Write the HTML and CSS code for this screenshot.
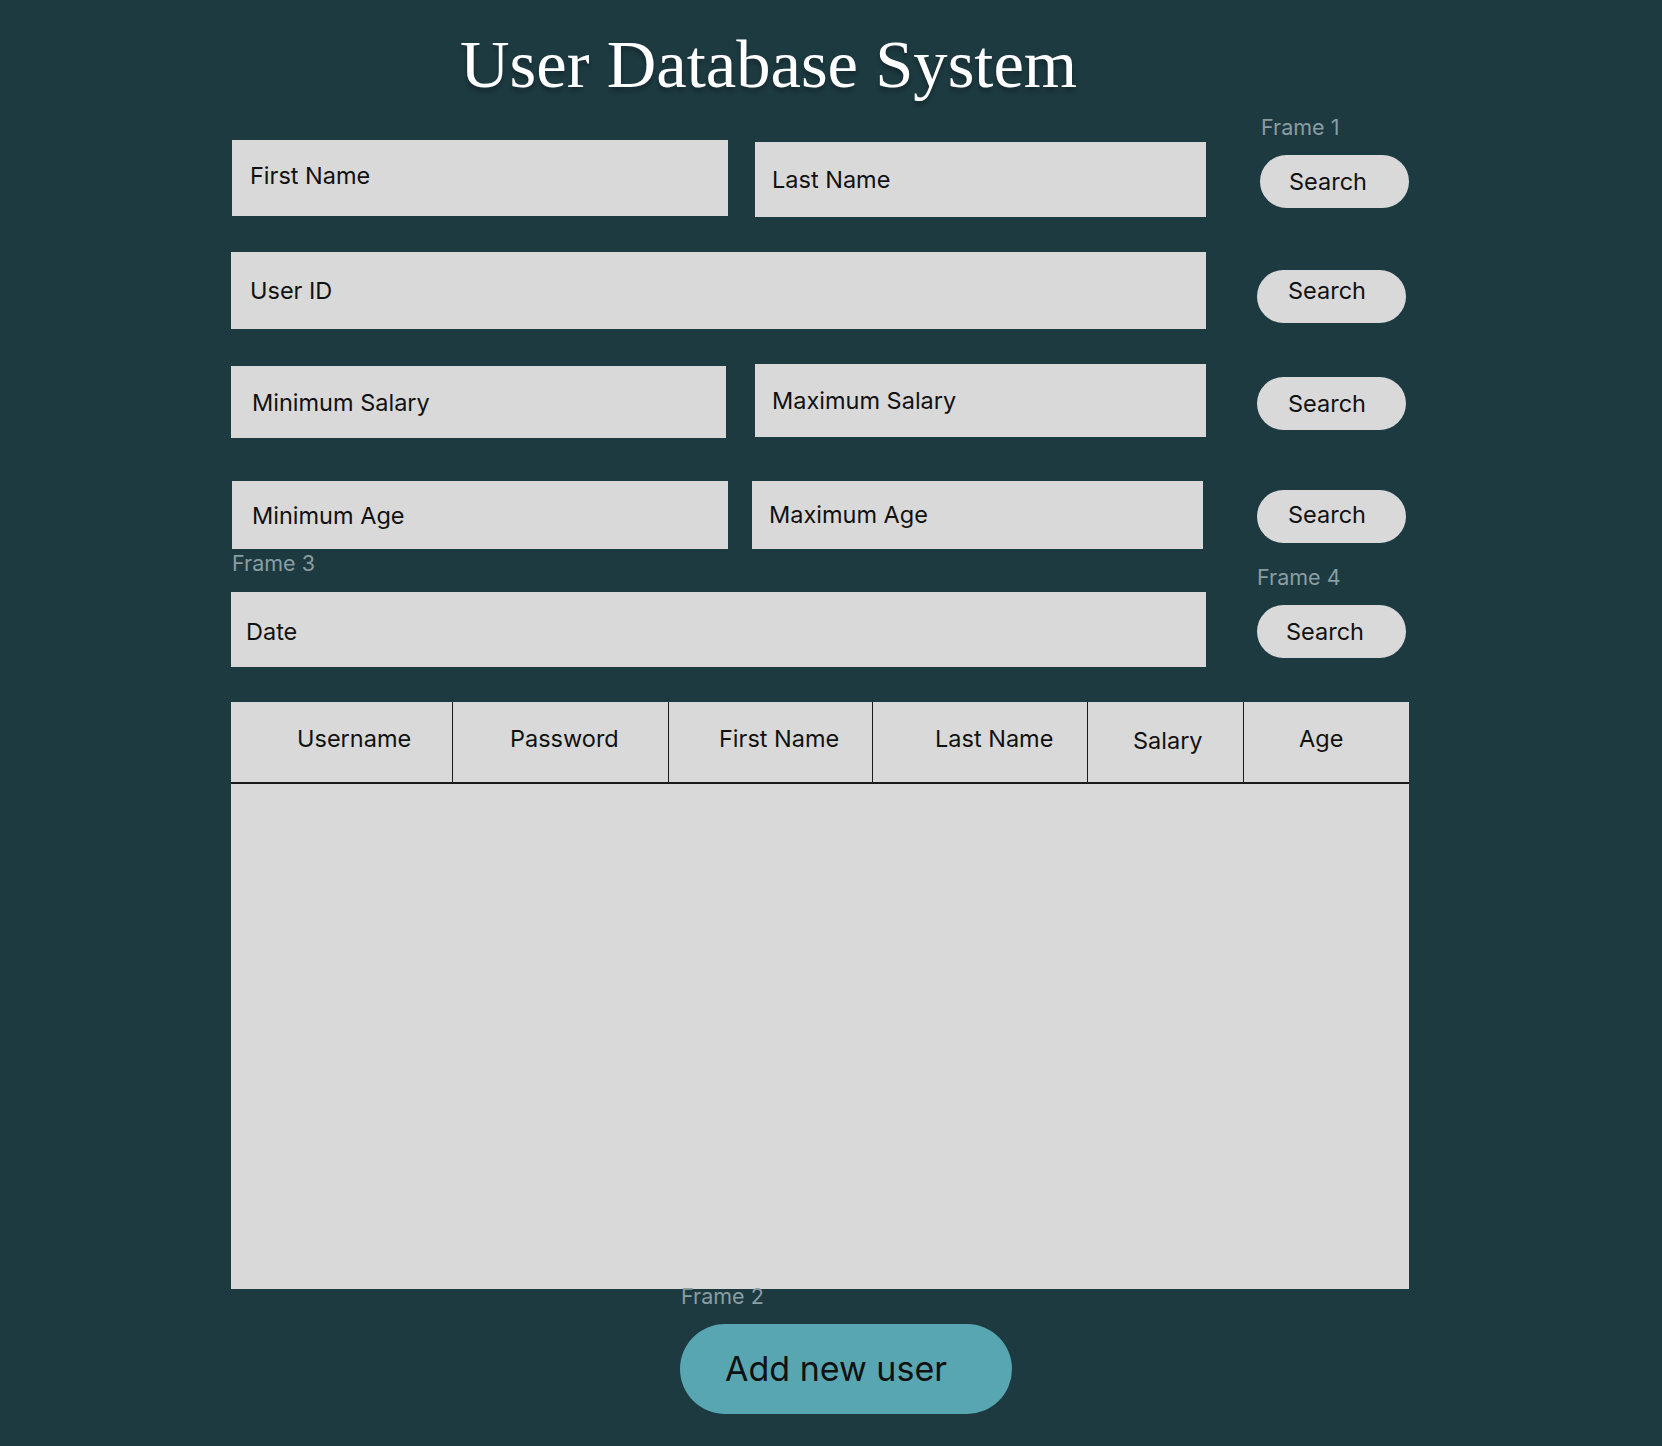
FILE: index.html
```html
<!DOCTYPE html>
<html lang="en">
<head>
<meta charset="utf-8">
<title>User Database System</title>
<link rel="stylesheet" href="styles.css">
</head>
<body>
<div class="page">
  <h1 class="title">User Database System</h1>

  <div class="row row-1">
    <div class="field f-first">First Name</div>
    <div class="field f-last">Last Name</div>
    <div class="action a-1">
      <span class="frame-label fl-1">Frame 1</span>
      <button class="search s-1">Search</button>
    </div>
  </div>

  <div class="row row-2">
    <div class="field f-userid">User ID</div>
    <div class="action a-2">
      <button class="search s-2">Search</button>
    </div>
  </div>

  <div class="row row-3">
    <div class="field f-minsal">Minimum Salary</div>
    <div class="field f-maxsal">Maximum Salary</div>
    <div class="action a-3">
      <button class="search">Search</button>
    </div>
  </div>

  <div class="row row-4">
    <div class="field f-minage">Minimum Age</div>
    <div class="field f-maxage">Maximum Age</div>
    <div class="action a-4">
      <button class="search s-4">Search</button>
    </div>
  </div>

  <div class="labels">
    <span class="frame-label fl-3">Frame 3</span>
    <span class="frame-label fl-4">Frame 4</span>
  </div>

  <div class="row row-5">
    <div class="field f-date">Date</div>
    <div class="action a-5">
      <button class="search s-5">Search</button>
    </div>
  </div>

  <div class="table">
    <div class="thead">
      <div class="th c1">Username</div>
      <div class="th c2">Password</div>
      <div class="th c3">First Name</div>
      <div class="th c4">Last Name</div>
      <div class="th c5">Salary</div>
      <div class="th c6">Age</div>
    </div>
  </div>

  <div class="frame-label fl-2">Frame 2</div>
  <button class="add-user">Add new user</button>
</div>
</body>
</html>
```

FILE: styles.css
```css
html, body {
  margin: 0;
  padding: 0;
  background: #1d3a41;
}

body {
  width: 1662px;
  height: 1446px;
  overflow: hidden;
  font-family: Inter, "Noto Sans", sans-serif;
  color: #111111;
}

.page {
  padding: 30px 0 0 231px;
}

.title {
  margin: 0 0 0 229px;
  font-family: "Liberation Serif", "Times New Roman", serif;
  font-weight: 400;
  font-size: 68.6px;
  line-height: 69px;
  height: 69px;
  color: #ffffff;
  text-shadow: 0 4px 4px rgba(0, 0, 0, 0.3);
  white-space: nowrap;
}

/* rows */
.row {
  display: flex;
  align-items: flex-start;
}

.row-1 { margin-top: 41px; height: 77px; }
.row-2 { margin-top: 35px; height: 77px; }
.row-3 { margin-top: 35px; height: 74px; }
.row-4 { margin-top: 43px; height: 68px; }
.row-5 { height: 75px; }

.field {
  box-sizing: border-box;
  display: flex;
  align-items: center;
  background: #d9d9d9;
  font-size: 23.5px;
  line-height: 28px;
  color: #111111;
  white-space: nowrap;
}

.f-first  { margin-left: 1px; width: 496px; height: 76px; padding: 0 0 5px 18px; }
.f-last   { margin-left: 27px; margin-top: 2px; width: 451px; height: 75px; padding-left: 17px; }
.f-userid { width: 975px; height: 77px; padding-left: 19px; }
.f-minsal { margin-top: 2px; width: 495px; height: 72px; padding: 2px 0 0 21px; }
.f-maxsal { margin-left: 29px; width: 451px; height: 73px; padding-left: 17px; }
.f-minage { margin-left: 1px; width: 496px; height: 68px; padding: 2px 0 0 20px; }
.f-maxage { margin-left: 24px; width: 451px; height: 68px; padding: 0 0 1px 17px; }
.f-date   { width: 975px; height: 75px; padding: 4px 0 0 15px; }

.action {
  position: relative;
}

.a-1 { margin-left: 54px; margin-top: 15px; }
.a-2 { margin-left: 51px; margin-top: 18px; }
.a-3 { margin-left: 51px; margin-top: 13px; }
.a-4 { margin-left: 54px; margin-top: 9px; }
.a-5 { margin-left: 51px; margin-top: 13px; }

.search {
  box-sizing: border-box;
  display: block;
  width: 149px;
  height: 53px;
  margin: 0;
  padding: 0 0 0 31px;
  border: none;
  border-radius: 27px;
  background: #d9d9d9;
  font-family: Inter, "Noto Sans", sans-serif;
  font-size: 23.5px;
  line-height: 28px;
  color: #111111;
  text-align: left;
  cursor: pointer;
}

.s-1 { padding-left: 29px; }
.s-2 { padding-bottom: 11px; }
.s-4 { padding-bottom: 4px; }
.s-5 { padding-left: 29px; }

/* frame labels */
.frame-label {
  display: block;
  font-size: 21.5px;
  line-height: 21px;
  height: 21px;
  color: #8a9da1;
  white-space: nowrap;
}

.fl-1 {
  position: absolute;
  left: 1px;
  top: -38px;
}

.labels {
  display: flex;
  align-items: flex-start;
  height: 43px;
}

.fl-3 { margin-left: 1px; margin-top: 4px; width: 1025px; }
.fl-4 { margin-top: 18px; }

/* table */
.table {
  margin-top: 35px;
  width: 1178px;
  height: 587px;
  background: #d9d9d9;
}

.thead {
  display: grid;
  grid-template-columns: 222px 216px 204px 215px 156px 165px;
  height: 82px;
  box-sizing: border-box;
  border-bottom: 2px solid #1a1a1a;
}

.th {
  box-sizing: border-box;
  border-right: 1px solid #1a1a1a;
  padding-top: 23px;
  font-size: 23.5px;
  line-height: 28px;
  color: #111111;
  white-space: nowrap;
}

.c1 { padding-left: 66px; }
.c2 { padding-left: 57px; }
.c3 { padding-left: 50px; }
.c4 { padding-left: 62px; }
.c5 { padding-left: 45px; padding-top: 25px; }
.c6 { padding-left: 55px; border-right: none; }

.fl-2 {
  margin: -3px 0 0 450px;
}

.add-user {
  display: block;
  box-sizing: border-box;
  margin: 17px 0 0 449px;
  width: 332px;
  height: 90px;
  padding: 0 0 0 45px;
  border: none;
  border-radius: 45px;
  background: #58a6b2;
  font-family: Inter, "Noto Sans", sans-serif;
  font-size: 34px;
  line-height: 40px;
  color: #111111;
  text-align: left;
  cursor: pointer;
}
```
